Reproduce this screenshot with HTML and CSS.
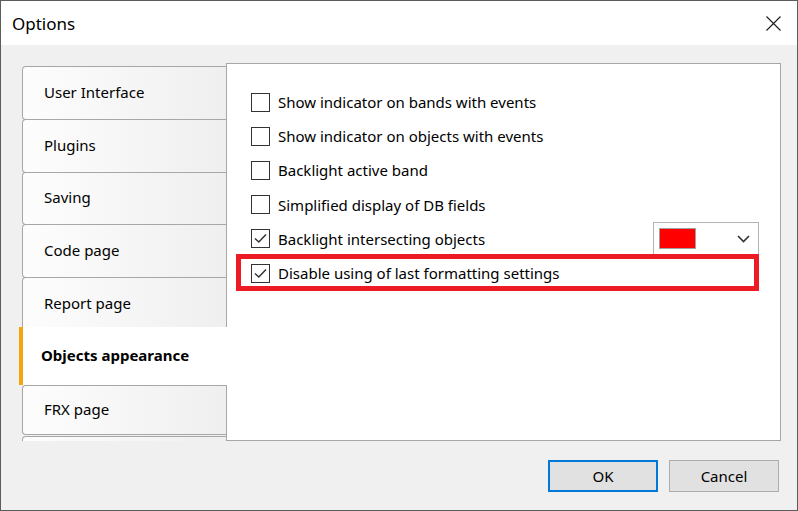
FILE: index.html
```html
<!DOCTYPE html>
<html lang="en">
<head>
  <meta charset="UTF-8">
  <title>Options</title>
  <link rel="stylesheet" href="styles.css">
</head>
<body>

  <div class="window">
    <div class="titlebar">
      <span class="title">Options</span>
      <svg class="close" width="15" height="15" viewBox="0 0 15 15">
        <path d="M0.5 0.5 L14.5 14.5 M14.5 0.5 L0.5 14.5" stroke="#1a1a1a" stroke-width="1.1" fill="none"/>
      </svg>
    </div>

    <div class="dialog-body">
      <div class="main">
        <div class="tabs">
          <div class="tab">User Interface</div>
          <div class="tab">Plugins</div>
          <div class="tab">Saving</div>
          <div class="tab">Code page</div>
          <div class="tab">Report page</div>
          <div class="tab active">Objects appearance</div>
          <div class="tab">FRX page</div>
          <div class="tab"></div>
        </div>

        <div class="panel">
          <label class="option">
            <span class="check"></span>
            Show indicator on bands with events
          </label>
          <label class="option">
            <span class="check"></span>
            Show indicator on objects with events
          </label>
          <label class="option">
            <span class="check"></span>
            Backlight active band
          </label>
          <label class="option">
            <span class="check"></span>
            Simplified display of DB fields
          </label>
          <label class="option">
            <span class="check checked">
              <svg width="19" height="19" viewBox="0 0 19 19"><path d="M4 9.5 L7.8 13 L15 5.5" stroke="#333" stroke-width="1.5" fill="none"/></svg>
            </span>
            Backlight intersecting objects
            <span class="color-select">
              <span class="swatch"></span>
              <svg class="chevron" width="13" height="8" viewBox="0 0 13 8"><path d="M1 1 L6.5 6.5 L12 1" stroke="#333" stroke-width="1.6" fill="none"/></svg>
            </span>
          </label>
          <label class="option marked">
            <span class="check checked">
              <svg width="19" height="19" viewBox="0 0 19 19"><path d="M4 9.5 L7.8 13 L15 5.5" stroke="#333" stroke-width="1.5" fill="none"/></svg>
            </span>
            Disable using of last formatting settings
          </label>
        </div>
      </div>

      <div class="buttons">
        <button class="btn default">OK</button>
        <button class="btn">Cancel</button>
      </div>
    </div>
  </div>

</body>
</html>
```

FILE: styles.css
```css
* {
  margin: 0;
  padding: 0;
  box-sizing: border-box;
}

body {
  font-family: "Noto Sans", "Open Sans", sans-serif;
  font-size: 15px;
  color: #000;
  background: #fff;
}

.window {
  width: 798px;
  height: 511px;
  border: 1px solid #5c5c5c;
  background: #f0f0f0;
  display: flex;
  flex-direction: column;
}

/* Title bar */
.titlebar {
  height: 44px;
  background: #fff;
  display: flex;
  align-items: center;
  padding-left: 11px;
}

.title {
  font-size: 17px;
}

.close {
  margin-left: auto;
  margin-right: 16px;
}

/* Dialog body */
.dialog-body {
  flex: 1;
  padding: 18px 16px 0 18px;
  display: flex;
  flex-direction: column;
}

.main {
  display: flex;
  height: 378px;
}

/* Tabs on the left */
.tabs {
  width: 208px;
  height: 100%;
  overflow: hidden;
  padding-top: 3px;
  flex-shrink: 0;
}

.tab {
  height: 53.75px;
  margin-left: 3px;
  margin-bottom: -1px;
  width: 204px;
  padding-left: 21px;
  padding-bottom: 2px;
  display: flex;
  align-items: center;
  border: 1px solid #a7a7a7;
  border-right: none;
  border-radius: 4px 0 0 4px;
  background: linear-gradient(to right, #fdfdfd, #efefef);
}

.tab.active {
  position: relative;
  z-index: 1;
  margin-left: 0;
  margin-top: -3.75px;
  margin-bottom: 0;
  width: 208px;
  height: 58px;
  padding-left: 18px;
  border: none;
  border-left: 4px solid #f5a60f;
  border-radius: 0;
  background: #fff;
  font-weight: bold;
}

.tab.active + .tab {
  height: 50px;
  margin-bottom: 1px;
}

/* Right panel */
.panel {
  flex: 1;
  margin-left: -1px;
  background: #fff;
  border: 1px solid #a7a7a7;
  padding: 21px 21px 0 24px;
  display: flex;
  flex-direction: column;
}

.option {
  position: relative;
  height: 34.2px;
  display: flex;
  align-items: center;
}

.check {
  width: 19px;
  height: 19px;
  border: 1px solid #333;
  margin-right: 8px;
  flex-shrink: 0;
  display: flex;
}

.check svg {
  margin: -1px;
}

.color-select {
  margin-left: auto;
  width: 106px;
  height: 33px;
  border: 1px solid #b4b4b4;
  background: #fff;
  display: flex;
  align-items: center;
  padding: 0 8px 0 5px;
}

.swatch {
  width: 37px;
  height: 21px;
  background: #ff0000;
  border: 1px solid #a0a0a0;
}

.chevron {
  margin-left: auto;
}

/* red highlight drawn over the last option */
.option.marked::after {
  content: '';
  position: absolute;
  top: -2px;
  bottom: -1px;
  left: -15px;
  right: 0;
  border: 5px solid #ed1c24;
}

/* Buttons */
.buttons {
  display: flex;
  justify-content: flex-end;
  gap: 11px;
  margin-top: 19px;
  padding-right: 2px;
}

.btn {
  width: 110px;
  height: 32px;
  font-family: inherit;
  font-size: 15px;
  color: #000;
  background: #e1e1e1;
  border: 1px solid #adadad;
}

.btn.default {
  border: 2px solid #0078d7;
}
```
